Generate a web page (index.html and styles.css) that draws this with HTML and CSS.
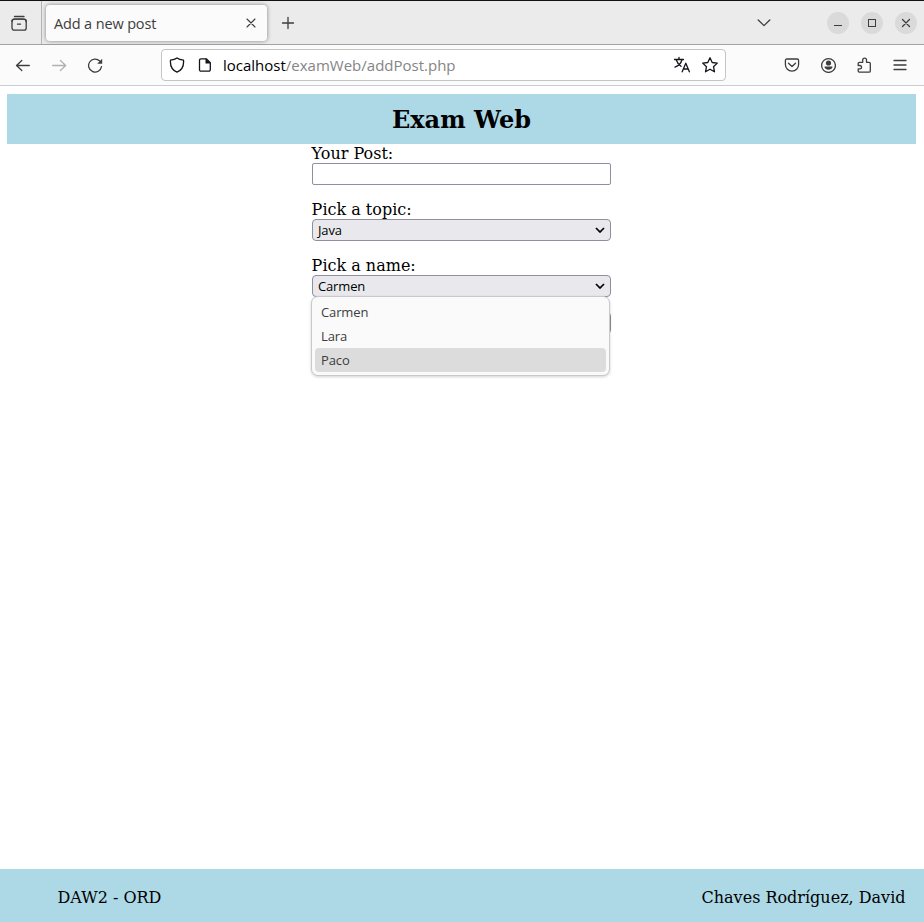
FILE: index.html
```html
<!DOCTYPE html>
<html lang="en">
<head>
<meta charset="utf-8">
<title>Add a new post</title>
<link rel="stylesheet" href="styles.css">
</head>
<body>
<div class="tabbar">
  <div class="view-button"><svg class="icon" width="18" height="18" viewBox="0 0 18 18"><path d="M4.500 2.500h9.500"/><rect x="2" y="5.200" width="14.200" height="11" rx="2.200"/><path d="M2 7.500q.3-2.300 2.500-2.300h9.200q2.200 0 2.500 2.300M7.500 10.200h3"/></svg></div>
  <div class="tab"><span class="tab-title">Add a new post</span><svg class="icon thin" width="10" height="10" viewBox="0 0 10 10"><path d="M1 1l8 8M9 1l-8 8"/></svg></div>
  <svg class="icon new-tab" width="14" height="14" viewBox="0 0 14 14"><path d="M7 1.500v11M1.500 7h11"/></svg>
  <svg class="icon tab-list" width="14" height="8" viewBox="0 0 14 8"><path d="M1.200 1l5.800 5.600L12.800 1"/></svg>
  <div class="window-buttons">
    <span class="window-button"><svg class="icon crisp" width="10" height="10" viewBox="0 0 10 10"><path d="M1 7.500h8"/></svg></span>
    <span class="window-button"><svg class="icon crisp" width="10" height="10" viewBox="0 0 10 10"><path d="M1.500 1.500h7v7h-7z"/></svg></span>
    <span class="window-button"><svg class="icon" width="10" height="10" viewBox="0 0 10 10"><path d="M1.500 1.500l7 7M8.500 1.500l-7 7"/></svg></span>
  </div>
</div>
<div class="toolbar">
  <div class="navigation">
    <svg class="icon" width="16" height="16" viewBox="0 0 16 16"><path d="M14.300 8.500H1.500M6.800 3.500L1.500 8.500l5.300 5"/></svg>
    <svg class="icon disabled" width="16" height="16" viewBox="0 0 16 16"><path d="M1.700 8.500h13M9.400 3.500l5.300 5-5.300 5"/></svg>
    <svg class="icon" width="16" height="16" viewBox="0 0 16 16"><path d="M14.500 9.700a6.500 6.500 0 1 1-1.800-5.700"/><path class="solid" d="M15.200 1.800v5h-5z"/></svg>
  </div>
  <div class="urlbar">
    <svg class="icon dark" width="16" height="16" viewBox="0 0 16 16"><path d="M8 .9C6.300 2.300 3.800 2.900 1.500 3.100 1 8.400 2.800 13 8 15.200 13.200 13 15 8.400 14.500 3.100 12.200 2.900 9.700 2.300 8 .9z"/></svg>
    <svg class="icon dark document" width="14" height="16" viewBox="0 0 14 16"><path d="M3 1.800h5.300l4 4v6.900a1.500 1.500 0 0 1-1.500 1.500H3a1.500 1.500 0 0 1-1.500-1.500V3.300A1.500 1.500 0 0 1 3 1.800z"/><path class="solid" d="M7.500 1.300v5.300h5.300z"/></svg>
    <span class="url"><span class="host">localhost</span><span class="path">/examWeb/addPost.php</span></span>
    <svg class="icon dark translate" width="18" height="18" viewBox="0 0 18 18"><path d="M1.500 3.500h9M6 1.500v2M3.200 3.800c.9 3 3 5.200 4.800 6.500M9 3.800c-.9 3.200-3.500 6.200-7 7.400M9.200 15.800l3.600-8.600 3.600 8.600M10.400 13h4.800"/></svg>
    <svg class="icon dark" width="18" height="18" viewBox="0 0 18 18"><path d="M9 1.800l2.200 4.700 5.100.6-3.800 3.600 1 5.100L9 13.200l-4.500 2.600 1-5.100-3.800-3.600 5.100-.6z"/></svg>
  </div>
  <div class="actions">
    <svg class="icon" width="16" height="16" viewBox="0 0 16 16"><path d="M2.900 2h10.200q1.500 0 1.500 1.500v4a6.600 6.600 0 0 1-13.200 0v-4Q1.400 2 2.900 2z"/><path d="M4.500 6.200L8 9.500l3.500-3.300"/></svg>
    <svg class="icon" width="16" height="16" viewBox="0 0 16 16"><circle cx="8.500" cy="8.500" r="6.900"/><circle class="solid" cx="8.500" cy="6" r="2.600"/><path class="solid" d="M4.500 9.600h8c.2 4.200-8.200 4.200-8 0z"/></svg>
    <svg class="icon" width="16" height="18" viewBox="0 0 16 18"><path d="M3.300 16.200h9.700q1.300 0 1.300-1.300V7.600q0-1.300-1.300-1.300h-2.500V4a1.900 1.900 0 0 0-3.800 0v2.300H3.500q-1.300 0-1.300 1.300v1.900h1.700a1.600 1.600 0 0 1 0 3.300H2.200v2.300q0 1.100 1.100 1.100z"/></svg>
    <svg class="icon menu" width="16" height="16" viewBox="0 0 16 16"><path d="M2 3.500h12M2 8h12M2 12.500h12"/></svg>
  </div>
</div>
<main class="page">
  <h1 class="banner">Exam Web</h1>
  <form class="post-form">
    <div class="field"><label for="post">Your Post:</label><input class="box" id="post" type="text"></div>
    <div class="field"><label>Pick a topic:</label>
      <div class="box select"><span>Java</span><svg class="caret" width="10" height="6" viewBox="0 0 10 6"><path d="M1 1l4 4 4-4"/></svg></div>
    </div>
    <div class="field"><label>Pick a name:</label>
      <div class="box select"><span>Carmen</span><svg class="caret" width="10" height="6" viewBox="0 0 10 6"><path d="M1 1l4 4 4-4"/></svg></div>
      <ul class="options"><li>Carmen</li><li>Lara</li><li class="active">Paco</li></ul>
    </div>
    <button class="submit" type="button"></button>
  </form>
</main>
<footer class="footer"><span>DAW2 - ORD</span><span>Chaves Rodríguez, David</span></footer>
</body>
</html>
```
FILE: styles.css
```css
* { box-sizing: border-box; }
body {
  margin: 0;
  height: 922px;
  display: flex;
  flex-direction: column;
  overflow: hidden;
  background: #fff;
  color: #000;
  font: 16px/19px "DejaVu Serif", serif;
}
.icon { flex: none; display: block; fill: none; stroke: #3d3d3d; stroke-width: 1.3; stroke-linejoin: round; stroke-linecap: round; }
.icon .solid { fill: #3d3d3d; stroke: none; }
.dark { stroke: #15141a; }
.dark .solid { fill: #15141a; }
.thin { stroke-width: 1.1; }
.crisp { shape-rendering: crispEdges; stroke-width: 1; stroke-linecap: butt; stroke-linejoin: miter; }
.icon.disabled { stroke: #b0b0b0; }

.tabbar {
  flex: none;
  height: 45px;
  display: flex;
  align-items: center;
  background: #ebebeb;
  border-top: 1px solid #150f15;
  border-bottom: 1px solid #a2a2a2;
  font-family: "Open Sans", sans-serif;
}
.view-button { width: 42px; height: 43px; padding: 13px 0 0 10px; border-right: 1px solid #b5b5b5; }
.tab {
  width: 221px;
  height: 36px;
  margin-left: 4px;
  padding: 0 11px 0 8px;
  display: flex;
  align-items: center;
  justify-content: space-between;
  background: #fbfbfb;
  border-radius: 4px;
  box-shadow: 0 0 4px rgba(0, 0, 0, .45);
}
.tab-title { padding-top: 1px; font-size: 14.5px; letter-spacing: -.14px; color: #3d3d3d; }
.new-tab { margin-left: 14px; }
.tab-list { margin-left: auto; margin-right: 56px; }
.window-buttons { display: flex; gap: 12px; padding-right: 7px; }
.window-button { width: 22px; height: 22px; border-radius: 50%; background: #dadada; display: flex; align-items: center; justify-content: center; }

.toolbar {
  flex: none;
  height: 41px;
  padding-left: 15px;
  display: flex;
  align-items: center;
  background: #fbfbfb;
  border-bottom: 1px solid #ccc;
}
.navigation { width: 146px; display: flex; gap: 20px; }
.urlbar {
  width: 565px;
  height: 32px;
  padding: 0 6px 0 7px;
  display: flex;
  align-items: center;
  background: #fff;
  border: 1px solid #c4c4c4;
  border-radius: 4px;
  font-family: "Open Sans", sans-serif;
}
.document { margin-left: 13px; }
.url { margin-left: 11px; font-size: 15px; white-space: nowrap; }
.host { color: #000; }
.path { color: #858585; }
.translate { margin-left: auto; margin-right: 10px; }
.actions { display: flex; align-items: center; gap: 20px; margin-left: 58px; }

.page { flex: 1; padding: 8px 8px 0 7px; }
.banner {
  margin: 0;
  height: 50px;
  padding-top: 1px;
  font-size: 24px;
  line-height: 50px;
  text-align: center;
  background: #add8e6;
}
.post-form { width: 299px; margin: 0 auto; display: flex; flex-direction: column; gap: 15px; }
.field { position: relative; }
.field label { display: block; margin-left: -.4px; }
.box {
  display: flex;
  align-items: center;
  justify-content: space-between;
  width: 299px;
  height: 22px;
  border: 1px solid #8f8f9d;
  border-radius: 2px;
  background: #fff;
}
.select {
  padding: 0 5px;
  background: #e9e9ed;
  border-radius: 4px;
  font: 13px/18px "Open Sans", sans-serif;
  letter-spacing: -.15px;
}
.select:first-letter { letter-spacing: 0; }
.caret { fill: none; stroke: #000; stroke-width: 1.7; }
.options {
  position: absolute;
  z-index: 1;
  top: 40px;
  left: -1px;
  width: 299px;
  height: 80px;
  margin: 0;
  padding: 3px;
  list-style: none;
  background: #fafafa;
  border: 1px solid #c9c9c9;
  border-radius: 7px;
  box-shadow: 0 1px 3px rgba(0, 0, 0, .18);
  font: 13px/24px "Open Sans", sans-serif;
  letter-spacing: -.12px;
  color: #3d3d3d;
}
.options li { padding-left: 6px; border-radius: 4px; }
.options .active { background: #dcdcdc; }
.submit { width: 299px; height: 22px; background: #e9e9ed; border: 1px solid #8f8f9d; border-radius: 4px; }
.footer {
  flex: none;
  height: 53px;
  padding: 3px 18.500px 0 57.500px;
  display: flex;
  align-items: center;
  justify-content: space-between;
  background: #add8e6;
}
```
